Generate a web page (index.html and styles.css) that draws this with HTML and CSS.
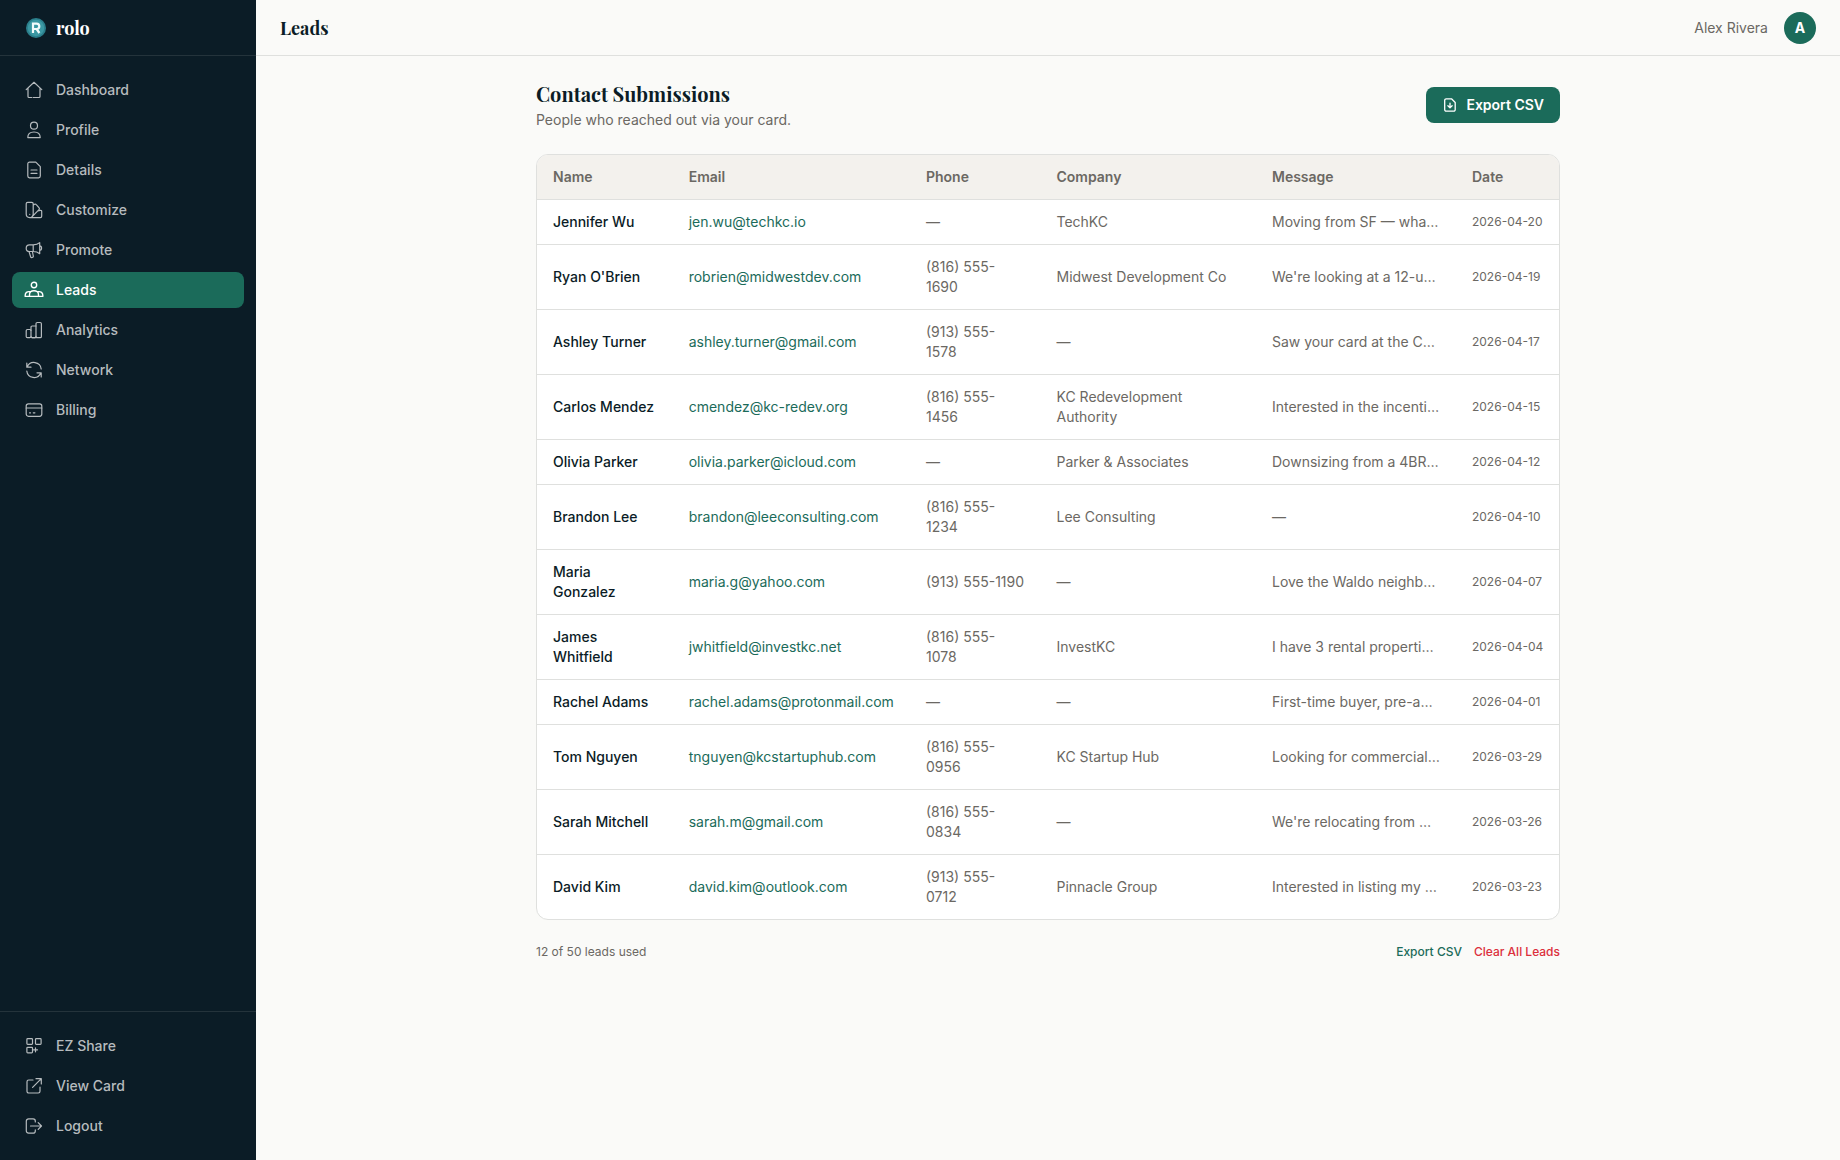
FILE: index.html
```html
<!DOCTYPE html>
<html lang="en">
<head>
<meta charset="utf-8">
<title>Leads · rolo</title>
<link rel="stylesheet" href="styles.css">
</head>
<body>
<div class="app">
  <aside class="sidebar">
    <div class="brand">
      <svg class="logo" viewBox="0 0 20 20"><circle cx="10" cy="10" r="10" fill="#2b7f8c"/><circle cx="10" cy="10" r="8.2" fill="#3b98a3"/><path d="M7 15V5.6h3.6a2.7 2.7 0 0 1 0 5.4H7.6M10.6 11l2.8 4" fill="none" stroke="#f2fbfb" stroke-width="2.2"/></svg>
      <span class="wordmark">rolo</span>
    </div>
    <nav class="nav">
      <a class="item"><svg class="icon" viewBox="0 0 20 20"><path d="M2.2 9.6 10 2.3l7.8 7.3M4 8.2v8.3c0 .6.4 1 1 1h2.700M16 8.200v8.300c0 .6-.4 1-1 1H9.200"/></svg>Dashboard</a>
      <a class="item"><svg class="icon" viewBox="0 0 20 20"><circle cx="10" cy="5.700" r="3.500"/><path d="M3.800 17.600c0-3.500 2.500-5.600 6.200-5.600s6.200 2.100 6.200 5.600z"/></svg>Profile</a>
      <a class="item"><svg class="icon" viewBox="0 0 20 20"><path d="M5.500 2.200h6.300l4.500 4.500v9.400a1.700 1.700 0 0 1-1.700 1.700H5.500a1.700 1.700 0 0 1-1.700-1.700V3.900a1.700 1.700 0 0 1 1.700-1.700zM7 10h6M7 13.300h6"/></svg>Details</a>
      <a class="item"><svg class="icon" viewBox="0 0 20 20"><path d="M3.700 2.300h4.100c.8 0 1.400.6 1.400 1.400v10.400a3.500 3.500 0 0 1-7 0V3.700c0-.8.700-1.400 1.500-1.400zM9.200 5.200l1.300-.9c.6-.4 1.300-.3 1.800.3l2.800 3.200c.5.600.4 1.300-.1 1.800l-6.800 7M13.700 11l2.500-.6c.8-.2 1.500.3 1.500 1.100v4.800c0 .8-.6 1.400-1.400 1.400H5.700M5.700 14.300h.1"/></svg>Customize</a>
      <a class="item"><svg class="icon" viewBox="0 0 20 20"><path d="M9.200 4.900H5.500a3.200 3.200 0 0 0 0 6.600h3.700c2.600 0 5 .9 6.500 2.200V2.600c-1.500 1.400-3.900 2.300-6.500 2.300zM9.200 4.900v6.600M15.700 5.800c2.500 0 2.500 4.600 0 4.600M5 11.500l1.600 5.200c.5 1.500 3 .8 2.700-.7l-.9-4.500"/></svg>Promote</a>
      <a class="item active"><svg class="icon" viewBox="0 0 20 20"><circle cx="10" cy="5" r="2.700"/><path d="M5.500 16.400v-1.700c0-2.500 1.900-3.900 4.500-3.900s4.500 1.400 4.500 3.900v1.700M6 11.700c-3-.5-4.800 1-4.800 3.600v1.100h17.600v-1.100c0-2.600-1.800-4.100-4.800-3.600"/></svg>Leads</a>
      <a class="item"><svg class="icon" viewBox="0 0 20 20"><rect x="2.200" y="9.500" width="4.800" height="8.200" rx="1.200"/><path d="M7 10.500V7.200C7 6.500 7.500 6 8.200 6H12M8 17.700h4"/><rect x="12" y="2.500" width="5.400" height="15.200" rx="1.300"/><path d="M7 16.300c0 .8.500 1.400 1.200 1.400h2.600c.7 0 1.200-.6 1.200-1.400"/></svg>Analytics</a>
      <a class="item"><svg class="icon" viewBox="0 0 20 20"><path d="M2.800 3v4.200H7M3.200 7A7.300 7.300 0 0 1 17.200 9M17.200 17v-4.200H13M16.800 13A7.300 7.300 0 0 1 2.800 11"/></svg>Network</a>
      <a class="item"><svg class="icon" viewBox="0 0 20 20"><rect x="2.200" y="3.900" width="15.600" height="12.400" rx="2.200"/><path d="M2.200 8h15.600M5.500 12.800h1M9.300 12.800h1.600"/></svg>Billing</a>
    </nav>
    <div class="nav nav-bottom">
      <a class="item"><svg class="icon" viewBox="0 0 20 20"><rect x="2.900" y="2.700" width="5.600" height="5.600" rx=".8"/><rect x="11.500" y="2.700" width="5.600" height="5.600" rx=".8"/><rect x="2.900" y="11.300" width="5.600" height="5.600" rx=".8"/><path d="M11.500 11.800v4M9.500 13.800h4"/></svg>EZ Share</a>
      <a class="item"><svg class="icon" viewBox="0 0 20 20"><path d="M9 4H4.700A1.700 1.700 0 0 0 3 5.700v9.600A1.700 1.700 0 0 0 4.700 17h9.600a1.700 1.700 0 0 0 1.700-1.700V11M12 2.700h5.300V8M17.300 2.700l-8.700 8.700"/></svg>View Card</a>
      <a class="item"><svg class="icon" viewBox="0 0 20 20"><path d="M11.300 6V5a2.200 2.200 0 0 0-2.200-2.200H4.700A2.400 2.400 0 0 0 2.300 5v9.800a2.300 2.300 0 0 0 2.400 2.300h4.400a2.200 2.200 0 0 0 2.200-2.200v-1M6.500 10h11M14.200 6.700l3.300 3.300-3.300 3.300"/></svg>Logout</a>
    </div>
  </aside>
  <div class="main">
    <header class="topbar">
      <h1 class="page-title">Leads</h1>
      <div class="user"><span>Alex Rivera</span><span class="avatar">A</span></div>
    </header>
    <main class="content">
      <div class="heading">
        <div>
          <h2 class="title">Contact Submissions</h2>
          <p class="subtitle">People who reached out via your card.</p>
        </div>
        <button class="export"><svg class="icon-sm" viewBox="0 0 16 16"><path d="M4.200 1.800h5.300l3.700 3.700v7.200a1.500 1.500 0 0 1-1.500 1.500H4.200a1.500 1.500 0 0 1-1.500-1.500V3.300a1.500 1.500 0 0 1 1.500-1.500zM8 6.200v4.300M5.900 8.800 8 10.900l2.100-2.100"/></svg>Export CSV</button>
      </div>
      <div class="card">
        <table class="leads">
          <colgroup><col class="c-name"><col class="c-email"><col class="c-phone"><col class="c-company"><col class="c-message"><col></colgroup>
          <thead><tr><th>Name</th><th>Email</th><th>Phone</th><th>Company</th><th>Message</th><th>Date</th></tr></thead>
          <tbody>
            <tr><td>Jennifer Wu</td><td>jen.wu@techkc.io</td><td>—</td><td>TechKC</td><td>Moving from SF — wha…</td><td>2026-04-20</td></tr>
            <tr><td>Ryan O'Brien</td><td>robrien@midwestdev.com</td><td>(816) 555-1690</td><td>Midwest Development Co</td><td>We're looking at a 12-u…</td><td>2026-04-19</td></tr>
            <tr><td>Ashley Turner</td><td>ashley.turner@gmail.com</td><td>(913) 555-1578</td><td>—</td><td>Saw your card at the C…</td><td>2026-04-17</td></tr>
            <tr><td>Carlos Mendez</td><td>cmendez@kc-redev.org</td><td>(816) 555-1456</td><td>KC Redevelopment Authority</td><td>Interested in the incenti…</td><td>2026-04-15</td></tr>
            <tr><td>Olivia Parker</td><td>olivia.parker@icloud.com</td><td>—</td><td>Parker &amp; Associates</td><td>Downsizing from a 4BR…</td><td>2026-04-12</td></tr>
            <tr><td>Brandon Lee</td><td>brandon@leeconsulting.com</td><td>(816) 555-1234</td><td>Lee Consulting</td><td>—</td><td>2026-04-10</td></tr>
            <tr><td>Maria Gonzalez</td><td>maria.g@yahoo.com</td><td>(913) 555-1190</td><td>—</td><td>Love the Waldo neighb…</td><td>2026-04-07</td></tr>
            <tr><td>James Whitfield</td><td>jwhitfield@investkc.net</td><td>(816) 555-1078</td><td>InvestKC</td><td>I have 3 rental properti…</td><td>2026-04-04</td></tr>
            <tr><td>Rachel Adams</td><td>rachel.adams@protonmail.com</td><td>—</td><td>—</td><td>First-time buyer, pre-a…</td><td>2026-04-01</td></tr>
            <tr><td>Tom Nguyen</td><td>tnguyen@kcstartuphub.com</td><td>(816) 555-0956</td><td>KC Startup Hub</td><td>Looking for commercial…</td><td>2026-03-29</td></tr>
            <tr><td>Sarah Mitchell</td><td>sarah.m@gmail.com</td><td>(816) 555-0834</td><td>—</td><td>We're relocating from …</td><td>2026-03-26</td></tr>
            <tr><td>David Kim</td><td>david.kim@outlook.com</td><td>(913) 555-0712</td><td>Pinnacle Group</td><td>Interested in listing my …</td><td>2026-03-23</td></tr>
          </tbody>
        </table>
      </div>
      <div class="foot">
        <span>12 of 50 leads used</span>
        <div class="actions"><a class="link">Export CSV</a><a class="link danger">Clear All Leads</a></div>
      </div>
    </main>
  </div>
</div>
</body>
</html>
```
FILE: styles.css
```css
* { box-sizing: border-box; }

body {
  margin: 0;
  font: 14px/20px Inter, "Liberation Sans", sans-serif;
  color: #6b6863;
  background: #fafaf8;
}

.app { display: flex; height: 100vh; }

.sidebar {
  display: flex;
  flex-direction: column;
  width: 256px;
  flex: none;
  background: #0b1c26;
}

.brand {
  display: flex;
  align-items: center;
  gap: 10px;
  height: 56px;
  padding: 0 26px;
  border-bottom: 1px solid #24333b;
}

.logo { width: 20px; height: 20px; }

.wordmark, .page-title, .title {
  font-family: "Playfair Display", "Liberation Serif", serif;
  font-weight: 700;
}

.wordmark { color: #fff; font-size: 18px; line-height: 28px; }

.nav {
  display: flex;
  flex: 1;
  flex-direction: column;
  gap: 4px;
  padding: 16px 12px;
}

.nav-bottom { flex: none; border-top: 1px solid #24333b; }

.item {
  display: flex;
  align-items: center;
  gap: 12px;
  height: 36px;
  padding: 0 12px;
  border-radius: 8px;
  color: #b6bbbe;
  font-weight: 500;
}

.item.active { background: #1b6b5a; color: #fff; }

.icon, .icon-sm {
  width: 20px;
  height: 20px;
  fill: none;
  stroke: currentColor;
  stroke-width: 1.2;
  stroke-linecap: round;
  stroke-linejoin: round;
}

.item.active .icon { stroke-width: 1.4; }
.icon-sm { width: 16px; height: 16px; stroke-width: 1.3; }

.main { flex: 1; }

.topbar {
  display: flex;
  align-items: center;
  justify-content: space-between;
  height: 56px;
  padding: 0 24px;
  border-bottom: 1px solid #dfe0de;
}

.page-title { margin: 0; font-size: 18px; line-height: 28px; color: #0b1c26; }

.user { display: flex; align-items: center; gap: 16px; }

.avatar {
  width: 32px;
  height: 32px;
  border-radius: 50%;
  background: #1b6b5a;
  color: #fff;
  font-weight: 700;
  line-height: 32px;
  text-align: center;
}

.content { width: 1024px; margin: 0 auto; padding-top: 24px; }

.heading {
  display: flex;
  align-items: center;
  justify-content: space-between;
  height: 50px;
  margin-bottom: 24px;
}

.title { margin: 0 0 2px; font-size: 20px; line-height: 28px; color: #0b1c26; }

.subtitle { margin: 0; }

.export {
  display: flex;
  align-items: center;
  gap: 8px;
  height: 36px;
  padding: 0 16px;
  border: 0;
  border-radius: 8px;
  background: #1b6b5a;
  color: #fff;
  font: 600 14px/20px Inter, "Liberation Sans", sans-serif;
}

.card {
  overflow: hidden;
  border: 1px solid #dfe0de;
  border-radius: 12px;
  background: #fff;
}

.leads { width: 100%; table-layout: fixed; border-spacing: 0; }

.c-name { width: 135.7px; }
.c-email { width: 237.3px; }
.c-phone { width: 130.5px; }
.c-company { width: 215.5px; }
.c-message { width: 200px; }

.leads th, .leads td {
  padding: 12px 16px;
  border-bottom: 1px solid #dfe0de;
  text-align: left;
}

.leads th { background: #f3f1ed; font-weight: 600; }
.leads tr:last-child td { border-bottom: 0; }
.leads td:nth-child(1) { color: #0b1c26; font-weight: 500; }
.leads td:nth-child(2) { color: #1b6b5a; }
.leads td:nth-child(5) { white-space: nowrap; }
.leads td:nth-child(6) { padding-right: 0; font-size: 12px; white-space: nowrap; }

.foot {
  display: flex;
  justify-content: space-between;
  margin-top: 24px;
  font-size: 12px;
  line-height: 16px;
}

.actions { display: flex; gap: 12px; }
.link { color: #1b6b5a; font-weight: 500; }
.link.danger { color: #dc2f3c; }
```
